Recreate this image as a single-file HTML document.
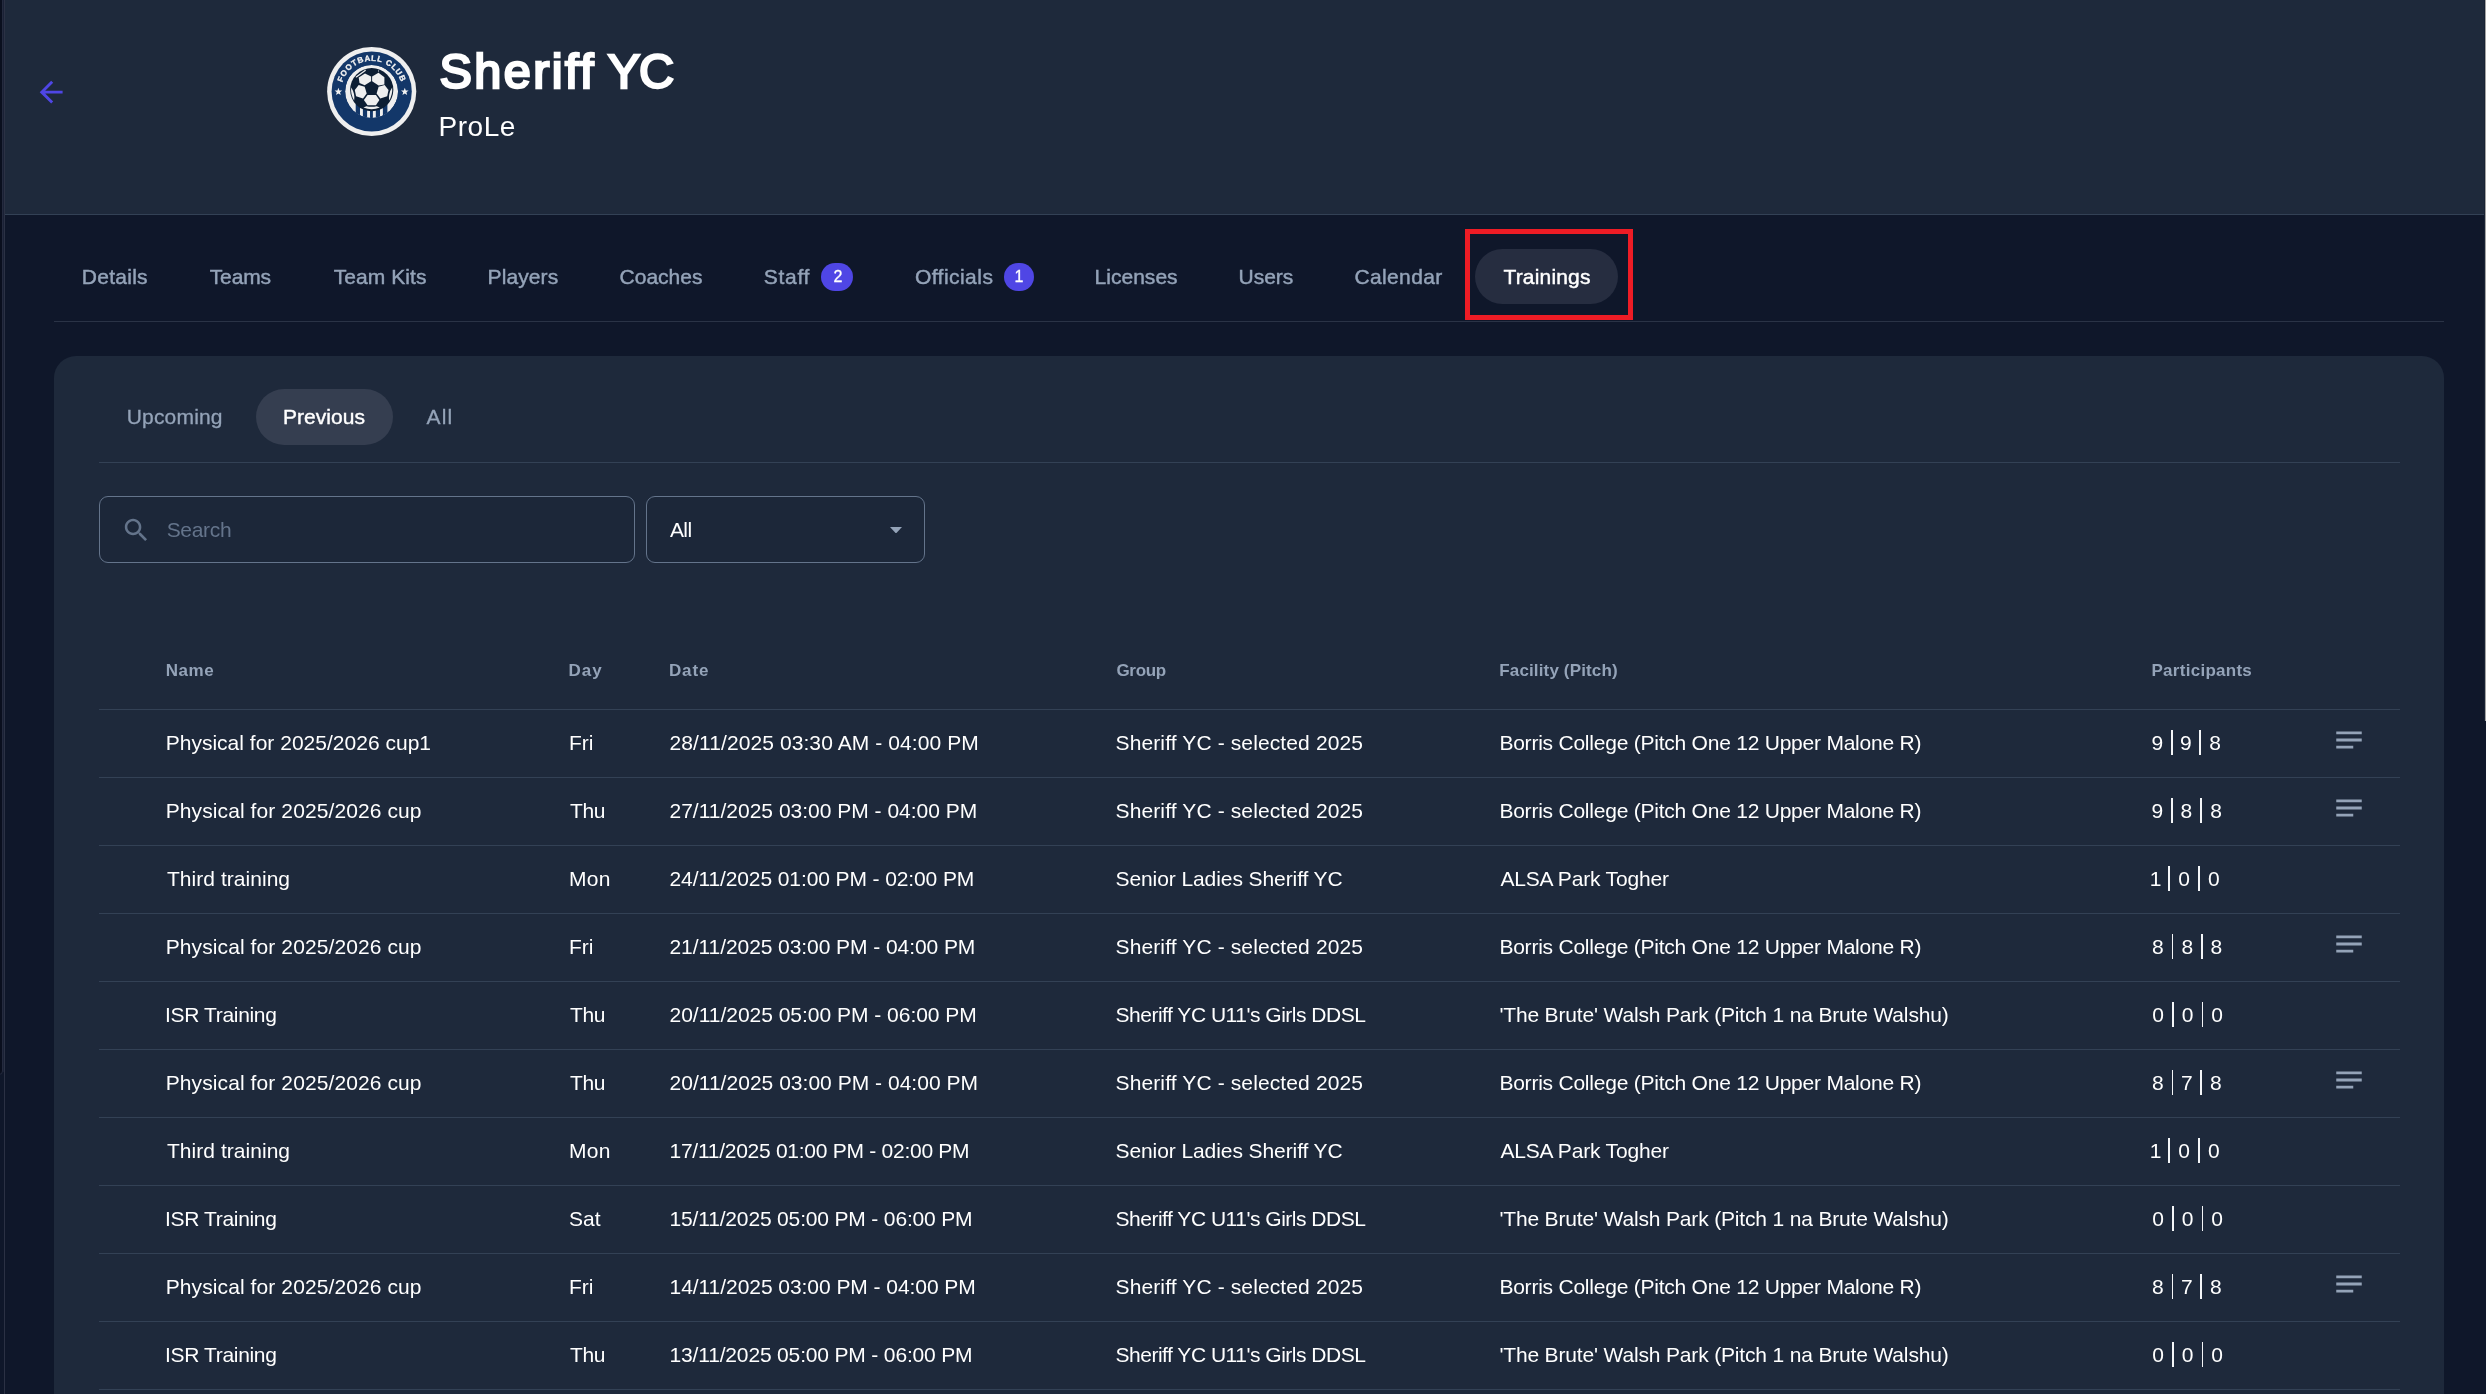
<!DOCTYPE html>
<html><head><meta charset="utf-8"><title>Sheriff YC - Trainings</title>
<style>
html,body{margin:0;padding:0}
body{width:2486px;height:1394px;overflow:hidden;position:relative;background:#0f172a;font-family:"Liberation Sans", sans-serif;}
.t{position:absolute;white-space:pre;line-height:1;}
</style></head>
<body>
<div style="position:absolute;left:0;top:0;width:5px;height:1394px;background:#0f172a"></div>
<div style="position:absolute;left:-10px;top:-10px;width:11px;height:1083px;background:#0a0f1e;border:1px solid #242a3e;border-radius:4px"></div>
<div style="position:absolute;left:3px;top:0;width:1px;height:1072px;background:#1a2135"></div>
<div style="position:absolute;left:4px;top:0;width:1px;height:1394px;background:#2b3144"></div>
<div style="position:absolute;left:5px;top:0;width:2481px;height:214px;background:#1e293b;border-bottom:1px solid #334155"></div>
<div style="position:absolute;left:2484px;top:0;width:1px;height:721px;background:#182234"></div>
<div style="position:absolute;left:2485px;top:0;width:1px;height:721px;background:#a3a3a3"></div>
<svg style="position:absolute;left:34.2px;top:74.6px" width="34.34" height="34.34" viewBox="0 0 24 24"><path fill="#4f46e5" d="M20 11H7.83l5.59-5.59L12 4l-8 8 8 8 1.41-1.41L7.83 13H20v-2z"/></svg>
<svg style="position:absolute;left:320px;top:40px;will-change:transform" width="104" height="104" viewBox="320 40 104 104">
<defs>
<path id="arc" d="M342.50 82.01A30.70 30.70 0 0 1 400.90 82.01"/>
<clipPath id="ringclip"><circle cx="371.6" cy="91.5" r="26.45"/></clipPath>
</defs>
<circle cx="371.70" cy="91.50" r="44.6" fill="#efefef"/>
<circle cx="371.70" cy="91.50" r="40.1" fill="#133769"/>
<text font-family="'Liberation Sans', sans-serif" font-weight="700" font-size="8.0" fill="#f2f2f2" stroke="#f2f2f2" stroke-width="0.3" letter-spacing="0.78"><textPath href="#arc" startOffset="50%" text-anchor="middle">FOOTBALL CLUB</textPath></text>
<polygon points="338.40,87.80 339.40,90.42 342.20,90.56 340.02,92.33 340.75,95.04 338.40,93.50 336.05,95.04 336.78,92.33 334.60,90.56 337.40,90.42" fill="#f2f2f2"/>
<polygon points="404.80,87.80 405.80,90.42 408.60,90.56 406.42,92.33 407.15,95.04 404.80,93.50 402.45,95.04 403.18,92.33 401.00,90.56 403.80,90.42" fill="#f2f2f2"/>
<g clip-path="url(#ringclip)">
<circle cx="371.6" cy="91.5" r="26.45" fill="#efefef"/>
<rect x="355.70" y="104" width="4.30" height="16" fill="#133769"/>
<rect x="362.90" y="104" width="4.20" height="16" fill="#133769"/>
<rect x="370.00" y="104" width="2.90" height="16" fill="#133769"/>
<rect x="375.80" y="104" width="4.20" height="16" fill="#133769"/>
<rect x="382.90" y="104" width="4.50" height="16" fill="#133769"/>
</g>
<circle cx="371.75" cy="89.65" r="21.60" fill="#0d1e33"/>
<polygon points="371.10,76.60 371.10,81.20 364.70,85.30 359.50,83.00 358.70,77.50 365.00,73.50" fill="#efefef"/>
<polygon points="372.10,76.60 378.50,72.80 384.40,77.20 384.40,84.60 378.60,85.50 372.10,81.20" fill="#efefef"/>
<polygon points="358.70,85.00 364.70,86.80 366.70,93.60 363.00,98.50 356.10,96.20 354.80,90.10" fill="#efefef"/>
<polygon points="384.60,85.00 378.60,86.80 376.60,93.60 380.30,98.50 387.20,96.20 388.50,90.10" fill="#efefef"/>
<polygon points="367.55,94.90 375.90,94.90 379.40,100.00 375.90,105.20 367.55,105.20 363.90,100.00" fill="#efefef"/>
<path d="M354.20 100.62Q350.48 94.56 351.16 87.49Q355.16 93.48 354.20 100.62Z" fill="#efefef"/>
<path d="M389.10 100.62Q392.82 94.56 392.14 87.49Q388.14 93.48 389.10 100.62Z" fill="#efefef"/>
<path d="M356.3 76.9L365.2 70.4" stroke="#efefef" stroke-width="1.3" stroke-linecap="round" fill="none"/>
<polygon points="378.0,70.2 379.0,70.6 378.9,72.6" fill="#efefef"/>
<path d="M363.4 107.6Q371.6 111.0 379.8 107.6L376.8 106.2Q371.6 107.3 366.4 106.2Z" fill="#efefef"/>
</svg>
<div style="position:absolute;left:54px;top:321px;width:2390px;height:1px;background:#2a3346"></div>
<div style="position:absolute;left:1475px;top:248.5px;width:143px;height:55.5px;border-radius:28px;background:#262d40"></div>
<div style="position:absolute;left:1465px;top:229px;width:158px;height:81px;border:5px solid #ee1c25"></div>
<div style="position:absolute;left:821px;top:263px;width:32px;height:28px;border-radius:14px;background:#4f46e5"></div>
<div style="position:absolute;left:1004px;top:263px;width:30px;height:28px;border-radius:14px;background:#4f46e5"></div>
<div style="position:absolute;left:54px;top:356px;width:2390px;height:1100px;border-radius:22px;background:#1e293b"></div>
<div style="position:absolute;left:256px;top:389px;width:137px;height:56px;border-radius:28px;background:#353e50"></div>
<div style="position:absolute;left:99px;top:462px;width:2301px;height:1px;background:#334155"></div>
<div style="position:absolute;left:99px;top:496px;width:536px;height:67px;box-sizing:border-box;border:1.4px solid #64748b;border-radius:9px;background:#1c2739"></div>
<div style="position:absolute;left:646px;top:496px;width:279px;height:67px;box-sizing:border-box;border:1.4px solid #64748b;border-radius:9px;background:#1c2739"></div>
<svg style="position:absolute;left:120.94px;top:514.79px" width="30.5" height="30.5" viewBox="0 0 24 24"><path fill="#64748b" d="M15.5 14h-.79l-.28-.27C15.41 12.59 16 11.11 16 9.5 16 5.91 13.09 3 9.5 3S3 5.91 3 9.5 5.91 16 9.5 16c1.61 0 3.09-.59 4.23-1.57l.27.28v.79l5 4.99L20.49 19l-4.99-5zm-6 0C7.01 14 5 11.99 5 9.5S7.01 5 9.5 5 14 7.01 14 9.5 11.99 14 9.5 14z"/></svg>
<svg style="position:absolute;left:889.9px;top:526.8px" width="12" height="6.5" viewBox="0 0 12 6.5"><path fill="#94a3b8" d="M0 0h12L6 6.5z"/></svg>
<div style="position:absolute;left:99px;top:709px;width:2301px;height:1px;background:#334155"></div>
<div style="position:absolute;left:99px;top:777px;width:2301px;height:1px;background:#334155"></div>
<div style="position:absolute;left:99px;top:845px;width:2301px;height:1px;background:#334155"></div>
<div style="position:absolute;left:99px;top:913px;width:2301px;height:1px;background:#334155"></div>
<div style="position:absolute;left:99px;top:981px;width:2301px;height:1px;background:#334155"></div>
<div style="position:absolute;left:99px;top:1049px;width:2301px;height:1px;background:#334155"></div>
<div style="position:absolute;left:99px;top:1117px;width:2301px;height:1px;background:#334155"></div>
<div style="position:absolute;left:99px;top:1185px;width:2301px;height:1px;background:#334155"></div>
<div style="position:absolute;left:99px;top:1253px;width:2301px;height:1px;background:#334155"></div>
<div style="position:absolute;left:99px;top:1321px;width:2301px;height:1px;background:#334155"></div>
<div style="position:absolute;left:99px;top:1389px;width:2301px;height:1px;background:#334155"></div>
<svg style="position:absolute;left:2331.95px;top:722.55px" width="34" height="34" viewBox="0 0 24 24"><path fill="#94a3b8" d="M21 11.01L3 11v2h18zM3 16h12v2H3zM21 6H3v2.01L21 8z"/></svg>
<svg style="position:absolute;left:2331.95px;top:790.55px" width="34" height="34" viewBox="0 0 24 24"><path fill="#94a3b8" d="M21 11.01L3 11v2h18zM3 16h12v2H3zM21 6H3v2.01L21 8z"/></svg>
<svg style="position:absolute;left:2331.95px;top:926.55px" width="34" height="34" viewBox="0 0 24 24"><path fill="#94a3b8" d="M21 11.01L3 11v2h18zM3 16h12v2H3zM21 6H3v2.01L21 8z"/></svg>
<svg style="position:absolute;left:2331.95px;top:1062.55px" width="34" height="34" viewBox="0 0 24 24"><path fill="#94a3b8" d="M21 11.01L3 11v2h18zM3 16h12v2H3zM21 6H3v2.01L21 8z"/></svg>
<svg style="position:absolute;left:2331.95px;top:1266.55px" width="34" height="34" viewBox="0 0 24 24"><path fill="#94a3b8" d="M21 11.01L3 11v2h18zM3 16h12v2H3zM21 6H3v2.01L21 8z"/></svg>
<div style="position:absolute;left:2171.20px;top:730.40px;width:1.6px;height:24.3px;background:#f4f6f8"></div>
<div style="position:absolute;left:2199.25px;top:730.40px;width:1.6px;height:24.3px;background:#f4f6f8"></div>
<div style="position:absolute;left:2171.20px;top:798.40px;width:1.6px;height:24.3px;background:#f4f6f8"></div>
<div style="position:absolute;left:2200.35px;top:798.40px;width:1.6px;height:24.3px;background:#f4f6f8"></div>
<div style="position:absolute;left:2168.30px;top:866.40px;width:1.6px;height:24.3px;background:#f4f6f8"></div>
<div style="position:absolute;left:2198.30px;top:866.40px;width:1.6px;height:24.3px;background:#f4f6f8"></div>
<div style="position:absolute;left:2171.90px;top:934.40px;width:1.6px;height:24.3px;background:#f4f6f8"></div>
<div style="position:absolute;left:2201.10px;top:934.40px;width:1.6px;height:24.3px;background:#f4f6f8"></div>
<div style="position:absolute;left:2172.20px;top:1002.40px;width:1.6px;height:24.3px;background:#f4f6f8"></div>
<div style="position:absolute;left:2201.50px;top:1002.40px;width:1.6px;height:24.3px;background:#f4f6f8"></div>
<div style="position:absolute;left:2171.90px;top:1070.40px;width:1.6px;height:24.3px;background:#f4f6f8"></div>
<div style="position:absolute;left:2200.00px;top:1070.40px;width:1.6px;height:24.3px;background:#f4f6f8"></div>
<div style="position:absolute;left:2168.30px;top:1138.40px;width:1.6px;height:24.3px;background:#f4f6f8"></div>
<div style="position:absolute;left:2198.30px;top:1138.40px;width:1.6px;height:24.3px;background:#f4f6f8"></div>
<div style="position:absolute;left:2172.20px;top:1206.40px;width:1.6px;height:24.3px;background:#f4f6f8"></div>
<div style="position:absolute;left:2201.50px;top:1206.40px;width:1.6px;height:24.3px;background:#f4f6f8"></div>
<div style="position:absolute;left:2171.90px;top:1274.40px;width:1.6px;height:24.3px;background:#f4f6f8"></div>
<div style="position:absolute;left:2200.00px;top:1274.40px;width:1.6px;height:24.3px;background:#f4f6f8"></div>
<div style="position:absolute;left:2172.20px;top:1342.40px;width:1.6px;height:24.3px;background:#f4f6f8"></div>
<div style="position:absolute;left:2201.50px;top:1342.40px;width:1.6px;height:24.3px;background:#f4f6f8"></div>
<div style="position:absolute;left:0;top:0;width:2486px;height:1394px;will-change:transform">
<span class="t" style="left:439.50px;top:46.60px;font-size:48.6px;font-weight:400;color:#ffffff;letter-spacing:2.400px;-webkit-text-stroke:2.5px #fff;">Sheriff</span>
<span class="t" style="left:607.80px;top:46.60px;font-size:48.6px;font-weight:400;color:#ffffff;letter-spacing:-1.300px;-webkit-text-stroke:2.5px #fff;">YC</span>
<span class="t" style="left:438.50px;top:112.90px;font-size:28px;font-weight:400;color:#ffffff;letter-spacing:0.525px;">ProLe</span>
<span class="t" style="left:81.80px;top:266.20px;font-size:21px;font-weight:400;color:#94a3b8;letter-spacing:0.267px;-webkit-text-stroke:0.45px #94a3b8;">Details</span>
<span class="t" style="left:209.80px;top:266.20px;font-size:21px;font-weight:400;color:#94a3b8;letter-spacing:-0.175px;-webkit-text-stroke:0.45px #94a3b8;">Teams</span>
<span class="t" style="left:333.70px;top:266.20px;font-size:21px;font-weight:400;color:#94a3b8;letter-spacing:0.062px;-webkit-text-stroke:0.45px #94a3b8;">Team Kits</span>
<span class="t" style="left:487.60px;top:266.20px;font-size:21px;font-weight:400;color:#94a3b8;letter-spacing:0.100px;-webkit-text-stroke:0.45px #94a3b8;">Players</span>
<span class="t" style="left:619.60px;top:266.20px;font-size:21px;font-weight:400;color:#94a3b8;-webkit-text-stroke:0.45px #94a3b8;">Coaches</span>
<span class="t" style="left:763.70px;top:266.20px;font-size:21px;font-weight:400;color:#94a3b8;letter-spacing:0.725px;-webkit-text-stroke:0.45px #94a3b8;">Staff</span>
<span class="t" style="left:914.90px;top:266.20px;font-size:21px;font-weight:400;color:#94a3b8;letter-spacing:0.462px;-webkit-text-stroke:0.45px #94a3b8;">Officials</span>
<span class="t" style="left:1094.60px;top:266.20px;font-size:21px;font-weight:400;color:#94a3b8;letter-spacing:0.014px;-webkit-text-stroke:0.45px #94a3b8;">Licenses</span>
<span class="t" style="left:1238.60px;top:266.20px;font-size:21px;font-weight:400;color:#94a3b8;letter-spacing:-0.050px;-webkit-text-stroke:0.45px #94a3b8;">Users</span>
<span class="t" style="left:1354.50px;top:266.20px;font-size:21px;font-weight:400;color:#94a3b8;letter-spacing:0.357px;-webkit-text-stroke:0.45px #94a3b8;">Calendar</span>
<span class="t" style="left:1503.50px;top:266.20px;font-size:21px;font-weight:400;color:#ffffff;letter-spacing:0.162px;-webkit-text-stroke:0.45px #fff;">Trainings</span>
<span class="t" style="left:833.60px;top:269.10px;font-size:16px;font-weight:400;color:#ffffff;-webkit-text-stroke:0.3px #fff;">2</span>
<span class="t" style="left:1014.50px;top:269.10px;font-size:16px;font-weight:400;color:#ffffff;-webkit-text-stroke:0.3px #fff;">1</span>
<span class="t" style="left:126.70px;top:406.20px;font-size:21px;font-weight:400;color:#94a3b8;letter-spacing:0.186px;-webkit-text-stroke:0.3px #94a3b8;">Upcoming</span>
<span class="t" style="left:283.00px;top:406.20px;font-size:21px;font-weight:400;color:#ffffff;letter-spacing:0.029px;-webkit-text-stroke:0.4px #fff;">Previous</span>
<span class="t" style="left:426.60px;top:406.20px;font-size:21px;font-weight:400;color:#94a3b8;letter-spacing:1.150px;-webkit-text-stroke:0.3px #94a3b8;">All</span>
<span class="t" style="left:166.70px;top:519.10px;font-size:21px;font-weight:400;color:#64748b;letter-spacing:-0.320px;">Search</span>
<span class="t" style="left:669.90px;top:519.10px;font-size:21px;font-weight:400;color:#ffffff;letter-spacing:-0.550px;">All</span>
<span class="t" style="left:165.70px;top:662.20px;font-size:17px;font-weight:700;color:#94a3b8;letter-spacing:0.567px;">Name</span>
<span class="t" style="left:568.50px;top:662.20px;font-size:17px;font-weight:700;color:#94a3b8;letter-spacing:1.000px;">Day</span>
<span class="t" style="left:669.00px;top:662.20px;font-size:17px;font-weight:700;color:#94a3b8;letter-spacing:0.833px;">Date</span>
<span class="t" style="left:1116.40px;top:662.20px;font-size:17px;font-weight:700;color:#94a3b8;letter-spacing:-0.300px;">Group</span>
<span class="t" style="left:1499.30px;top:662.20px;font-size:17px;font-weight:700;color:#94a3b8;letter-spacing:0.140px;">Facility (Pitch)</span>
<span class="t" style="left:2151.50px;top:662.20px;font-size:17px;font-weight:700;color:#94a3b8;letter-spacing:0.273px;">Participants</span>
<span class="t" style="left:165.70px;top:732.40px;font-size:21px;font-weight:400;color:#ffffff;letter-spacing:0.012px;">Physical for 2025/2026 cup1</span>
<span class="t" style="left:569.00px;top:732.40px;font-size:21px;font-weight:400;color:#ffffff;">Fri</span>
<span class="t" style="left:669.50px;top:732.40px;font-size:21px;font-weight:400;color:#ffffff;letter-spacing:0.093px;">28/11/2025 03:30 AM - 04:00 PM</span>
<span class="t" style="left:1115.50px;top:732.40px;font-size:21px;font-weight:400;color:#ffffff;letter-spacing:0.124px;">Sheriff YC - selected 2025</span>
<span class="t" style="left:1499.40px;top:732.40px;font-size:21px;font-weight:400;color:#ffffff;letter-spacing:-0.228px;">Borris College (Pitch One 12 Upper Malone R)</span>
<span class="t" style="left:2151.55px;top:732.40px;font-size:21px;font-weight:400;color:#ffffff;">9</span>
<span class="t" style="left:2179.90px;top:732.40px;font-size:21px;font-weight:400;color:#ffffff;">9</span>
<span class="t" style="left:2209.20px;top:732.40px;font-size:21px;font-weight:400;color:#ffffff;">8</span>
<span class="t" style="left:165.70px;top:800.40px;font-size:21px;font-weight:400;color:#ffffff;letter-spacing:0.100px;">Physical for 2025/2026 cup</span>
<span class="t" style="left:570.00px;top:800.40px;font-size:21px;font-weight:400;color:#ffffff;letter-spacing:-0.350px;">Thu</span>
<span class="t" style="left:669.50px;top:800.40px;font-size:21px;font-weight:400;color:#ffffff;">27/11/2025 03:00 PM - 04:00 PM</span>
<span class="t" style="left:1115.50px;top:800.40px;font-size:21px;font-weight:400;color:#ffffff;letter-spacing:0.124px;">Sheriff YC - selected 2025</span>
<span class="t" style="left:1499.40px;top:800.40px;font-size:21px;font-weight:400;color:#ffffff;letter-spacing:-0.228px;">Borris College (Pitch One 12 Upper Malone R)</span>
<span class="t" style="left:2151.55px;top:800.40px;font-size:21px;font-weight:400;color:#ffffff;">9</span>
<span class="t" style="left:2180.40px;top:800.40px;font-size:21px;font-weight:400;color:#ffffff;">8</span>
<span class="t" style="left:2210.25px;top:800.40px;font-size:21px;font-weight:400;color:#ffffff;">8</span>
<span class="t" style="left:167.00px;top:868.40px;font-size:21px;font-weight:400;color:#ffffff;letter-spacing:0.038px;">Third training</span>
<span class="t" style="left:569.00px;top:868.40px;font-size:21px;font-weight:400;color:#ffffff;letter-spacing:0.250px;">Mon</span>
<span class="t" style="left:669.50px;top:868.40px;font-size:21px;font-weight:400;color:#ffffff;letter-spacing:-0.103px;">24/11/2025 01:00 PM - 02:00 PM</span>
<span class="t" style="left:1115.50px;top:868.40px;font-size:21px;font-weight:400;color:#ffffff;letter-spacing:-0.087px;">Senior Ladies Sheriff YC</span>
<span class="t" style="left:1500.40px;top:868.40px;font-size:21px;font-weight:400;color:#ffffff;letter-spacing:-0.180px;">ALSA Park Togher</span>
<span class="t" style="left:2149.85px;top:868.40px;font-size:21px;font-weight:400;color:#ffffff;">1</span>
<span class="t" style="left:2178.30px;top:868.40px;font-size:21px;font-weight:400;color:#ffffff;">0</span>
<span class="t" style="left:2207.90px;top:868.40px;font-size:21px;font-weight:400;color:#ffffff;">0</span>
<span class="t" style="left:165.70px;top:936.40px;font-size:21px;font-weight:400;color:#ffffff;letter-spacing:0.100px;">Physical for 2025/2026 cup</span>
<span class="t" style="left:569.00px;top:936.40px;font-size:21px;font-weight:400;color:#ffffff;">Fri</span>
<span class="t" style="left:669.50px;top:936.40px;font-size:21px;font-weight:400;color:#ffffff;letter-spacing:-0.069px;">21/11/2025 03:00 PM - 04:00 PM</span>
<span class="t" style="left:1115.50px;top:936.40px;font-size:21px;font-weight:400;color:#ffffff;letter-spacing:0.124px;">Sheriff YC - selected 2025</span>
<span class="t" style="left:1499.40px;top:936.40px;font-size:21px;font-weight:400;color:#ffffff;letter-spacing:-0.228px;">Borris College (Pitch One 12 Upper Malone R)</span>
<span class="t" style="left:2152.10px;top:936.40px;font-size:21px;font-weight:400;color:#ffffff;">8</span>
<span class="t" style="left:2181.40px;top:936.40px;font-size:21px;font-weight:400;color:#ffffff;">8</span>
<span class="t" style="left:2210.50px;top:936.40px;font-size:21px;font-weight:400;color:#ffffff;">8</span>
<span class="t" style="left:165.00px;top:1004.40px;font-size:21px;font-weight:400;color:#ffffff;letter-spacing:-0.336px;">ISR Training</span>
<span class="t" style="left:570.00px;top:1004.40px;font-size:21px;font-weight:400;color:#ffffff;letter-spacing:-0.350px;">Thu</span>
<span class="t" style="left:669.50px;top:1004.40px;font-size:21px;font-weight:400;color:#ffffff;letter-spacing:-0.017px;">20/11/2025 05:00 PM - 06:00 PM</span>
<span class="t" style="left:1115.50px;top:1004.40px;font-size:21px;font-weight:400;color:#ffffff;letter-spacing:-0.488px;">Sheriff YC U11's Girls DDSL</span>
<span class="t" style="left:1499.40px;top:1004.40px;font-size:21px;font-weight:400;color:#ffffff;letter-spacing:-0.162px;">'The Brute' Walsh Park (Pitch 1 na Brute Walshu)</span>
<span class="t" style="left:2152.30px;top:1004.40px;font-size:21px;font-weight:400;color:#ffffff;">0</span>
<span class="t" style="left:2181.75px;top:1004.40px;font-size:21px;font-weight:400;color:#ffffff;">0</span>
<span class="t" style="left:2211.20px;top:1004.40px;font-size:21px;font-weight:400;color:#ffffff;">0</span>
<span class="t" style="left:165.70px;top:1072.40px;font-size:21px;font-weight:400;color:#ffffff;letter-spacing:0.100px;">Physical for 2025/2026 cup</span>
<span class="t" style="left:570.00px;top:1072.40px;font-size:21px;font-weight:400;color:#ffffff;letter-spacing:-0.350px;">Thu</span>
<span class="t" style="left:669.50px;top:1072.40px;font-size:21px;font-weight:400;color:#ffffff;letter-spacing:0.024px;">20/11/2025 03:00 PM - 04:00 PM</span>
<span class="t" style="left:1115.50px;top:1072.40px;font-size:21px;font-weight:400;color:#ffffff;letter-spacing:0.124px;">Sheriff YC - selected 2025</span>
<span class="t" style="left:1499.40px;top:1072.40px;font-size:21px;font-weight:400;color:#ffffff;letter-spacing:-0.228px;">Borris College (Pitch One 12 Upper Malone R)</span>
<span class="t" style="left:2152.10px;top:1072.40px;font-size:21px;font-weight:400;color:#ffffff;">8</span>
<span class="t" style="left:2180.90px;top:1072.40px;font-size:21px;font-weight:400;color:#ffffff;">7</span>
<span class="t" style="left:2209.90px;top:1072.40px;font-size:21px;font-weight:400;color:#ffffff;">8</span>
<span class="t" style="left:167.00px;top:1140.40px;font-size:21px;font-weight:400;color:#ffffff;letter-spacing:0.038px;">Third training</span>
<span class="t" style="left:569.00px;top:1140.40px;font-size:21px;font-weight:400;color:#ffffff;letter-spacing:0.250px;">Mon</span>
<span class="t" style="left:669.50px;top:1140.40px;font-size:21px;font-weight:400;color:#ffffff;letter-spacing:-0.266px;">17/11/2025 01:00 PM - 02:00 PM</span>
<span class="t" style="left:1115.50px;top:1140.40px;font-size:21px;font-weight:400;color:#ffffff;letter-spacing:-0.087px;">Senior Ladies Sheriff YC</span>
<span class="t" style="left:1500.40px;top:1140.40px;font-size:21px;font-weight:400;color:#ffffff;letter-spacing:-0.180px;">ALSA Park Togher</span>
<span class="t" style="left:2149.85px;top:1140.40px;font-size:21px;font-weight:400;color:#ffffff;">1</span>
<span class="t" style="left:2178.30px;top:1140.40px;font-size:21px;font-weight:400;color:#ffffff;">0</span>
<span class="t" style="left:2207.90px;top:1140.40px;font-size:21px;font-weight:400;color:#ffffff;">0</span>
<span class="t" style="left:165.00px;top:1208.40px;font-size:21px;font-weight:400;color:#ffffff;letter-spacing:-0.336px;">ISR Training</span>
<span class="t" style="left:569.00px;top:1208.40px;font-size:21px;font-weight:400;color:#ffffff;">Sat</span>
<span class="t" style="left:669.50px;top:1208.40px;font-size:21px;font-weight:400;color:#ffffff;letter-spacing:-0.162px;">15/11/2025 05:00 PM - 06:00 PM</span>
<span class="t" style="left:1115.50px;top:1208.40px;font-size:21px;font-weight:400;color:#ffffff;letter-spacing:-0.488px;">Sheriff YC U11's Girls DDSL</span>
<span class="t" style="left:1499.40px;top:1208.40px;font-size:21px;font-weight:400;color:#ffffff;letter-spacing:-0.162px;">'The Brute' Walsh Park (Pitch 1 na Brute Walshu)</span>
<span class="t" style="left:2152.30px;top:1208.40px;font-size:21px;font-weight:400;color:#ffffff;">0</span>
<span class="t" style="left:2181.75px;top:1208.40px;font-size:21px;font-weight:400;color:#ffffff;">0</span>
<span class="t" style="left:2211.20px;top:1208.40px;font-size:21px;font-weight:400;color:#ffffff;">0</span>
<span class="t" style="left:165.70px;top:1276.40px;font-size:21px;font-weight:400;color:#ffffff;letter-spacing:0.100px;">Physical for 2025/2026 cup</span>
<span class="t" style="left:569.00px;top:1276.40px;font-size:21px;font-weight:400;color:#ffffff;">Fri</span>
<span class="t" style="left:669.50px;top:1276.40px;font-size:21px;font-weight:400;color:#ffffff;letter-spacing:-0.052px;">14/11/2025 03:00 PM - 04:00 PM</span>
<span class="t" style="left:1115.50px;top:1276.40px;font-size:21px;font-weight:400;color:#ffffff;letter-spacing:0.124px;">Sheriff YC - selected 2025</span>
<span class="t" style="left:1499.40px;top:1276.40px;font-size:21px;font-weight:400;color:#ffffff;letter-spacing:-0.228px;">Borris College (Pitch One 12 Upper Malone R)</span>
<span class="t" style="left:2152.10px;top:1276.40px;font-size:21px;font-weight:400;color:#ffffff;">8</span>
<span class="t" style="left:2180.90px;top:1276.40px;font-size:21px;font-weight:400;color:#ffffff;">7</span>
<span class="t" style="left:2209.90px;top:1276.40px;font-size:21px;font-weight:400;color:#ffffff;">8</span>
<span class="t" style="left:165.00px;top:1344.40px;font-size:21px;font-weight:400;color:#ffffff;letter-spacing:-0.336px;">ISR Training</span>
<span class="t" style="left:570.00px;top:1344.40px;font-size:21px;font-weight:400;color:#ffffff;letter-spacing:-0.350px;">Thu</span>
<span class="t" style="left:669.50px;top:1344.40px;font-size:21px;font-weight:400;color:#ffffff;letter-spacing:-0.162px;">13/11/2025 05:00 PM - 06:00 PM</span>
<span class="t" style="left:1115.50px;top:1344.40px;font-size:21px;font-weight:400;color:#ffffff;letter-spacing:-0.488px;">Sheriff YC U11's Girls DDSL</span>
<span class="t" style="left:1499.40px;top:1344.40px;font-size:21px;font-weight:400;color:#ffffff;letter-spacing:-0.162px;">'The Brute' Walsh Park (Pitch 1 na Brute Walshu)</span>
<span class="t" style="left:2152.30px;top:1344.40px;font-size:21px;font-weight:400;color:#ffffff;">0</span>
<span class="t" style="left:2181.75px;top:1344.40px;font-size:21px;font-weight:400;color:#ffffff;">0</span>
<span class="t" style="left:2211.20px;top:1344.40px;font-size:21px;font-weight:400;color:#ffffff;">0</span>
</div>
</body></html>
